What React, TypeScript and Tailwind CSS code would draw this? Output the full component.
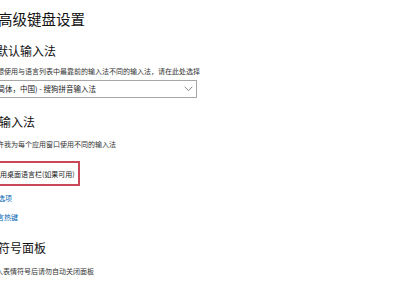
import React from 'react';

const Chevron: React.FC = () => (
  <svg width="9" height="6" viewBox="0 0 9 6" className="shrink-0">
    <path d="M0.7 0.8 L4.5 4.6 L8.3 0.8" fill="none" stroke="#777" strokeWidth="0.9" />
  </svg>
);

export default function App() {
  return (
    <div className="w-[399px] h-[300px] overflow-hidden bg-white text-[#111] font-['Noto_Sans_CJK_SC','Microsoft_YaHei',sans-serif]">
      <div className="pt-[10px]">
        {/* Page title */}
        <div className="-ml-[2px] text-[14.5px] leading-[18px] whitespace-nowrap">高级键盘设置</div>

        {/* Override default input method */}
        <div className="mt-[16px] -ml-[28px] text-[12px] leading-[14px] whitespace-nowrap">替代默认输入法</div>
        <div className="mt-[8px] -ml-[24px] text-[7px] leading-[10px] text-[#333] whitespace-nowrap">
          如果你想使用与语言列表中最靠前的输入法不同的输入法，请在此处选择
        </div>
        <div className="mt-[4px] -ml-[30px] w-[227px] h-[18px] border border-[#a6a6a6] flex items-center justify-between pl-[9px] pr-[3px]">
          <span className="text-[7.5px] leading-[10px] text-[#222] whitespace-nowrap">中文(简体，中国) - 搜狗拼音输入法</span>
          <Chevron />
        </div>

        {/* Switching input methods */}
        <div className="mt-[17px] -ml-[25px] text-[12px] leading-[14px] whitespace-nowrap">切换输入法</div>
        <div className="mt-[10px] -ml-[10px] text-[7px] leading-[10px] text-[#333] whitespace-nowrap">
          允许我为每个应用窗口使用不同的输入法
        </div>
        <div className="mt-[12px] -ml-[30px] w-[110px] h-[25px] border-2 border-solid border-[#c8485a] flex items-center pl-[6px] gap-[5px]">
          <span className="w-[10px] h-[10px] border border-[#333] shrink-0" />
          <span className="text-[7px] leading-[10px] text-[#222] whitespace-nowrap">使用桌面语言栏(如果可用)</span>
        </div>
        <div className="mt-[7px] -ml-[23px] text-[7px] leading-[10px] text-[#0063b1] whitespace-nowrap">语言栏选项</div>
        <div className="mt-[9px] -ml-[24px] text-[7px] leading-[10px] text-[#0063b1] whitespace-nowrap">输入语言热键</div>

        {/* Emoji panel */}
        <div className="mt-[19px] -ml-[26px] text-[12px] leading-[14px] whitespace-nowrap">表情符号面板</div>
        <div className="mt-[11px] -ml-[40px] flex items-center gap-[5px]">
          <span className="w-[10px] h-[10px] border border-[#333] shrink-0" />
          <span className="text-[7px] leading-[10px] text-[#333] whitespace-nowrap">在我输入表情符号后请勿自动关闭面板</span>
        </div>
      </div>
    </div>
  );
}
